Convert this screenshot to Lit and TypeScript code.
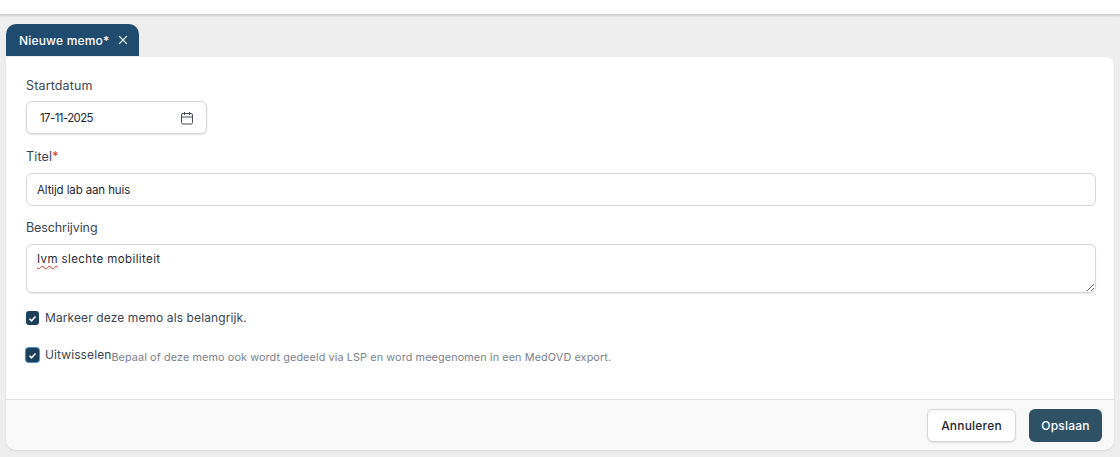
import { LitElement, html, css } from 'lit';
import { customElement } from 'lit/decorators.js';

@customElement('app-root')
export class AppRoot extends LitElement {
  static styles = css`
    :host {
      display: block;
      height: 457px;
      overflow: hidden;
      background: #eeeeee;
      font-family: Inter, 'Noto Sans', sans-serif;
      font-size: 12px;
      color: #1f2933;
    }
    .topbar {
      height: 14px;
      background: #fff;
      border-bottom: 1px solid #cfcfcf;
      box-shadow: 0 1px 2px rgba(0, 0, 0, 0.12);
    }
    .tabs {
      display: flex;
      padding: 9px 6px 0;
    }
    .tab {
      display: flex;
      align-items: center;
      gap: 9px;
      height: 32px;
      width: 133px;
      box-sizing: border-box;
      padding: 0 10px 0 13px;
      background: #1f4b6e;
      color: #fff;
      border-radius: 10px 10px 0 0;
      font-weight: 500;
      font-size: 12px;
      letter-spacing: 0.18px;
      white-space: nowrap;
    }
    .tab svg { flex: none; }
    .card {
      margin: 1px 6px 0;
      height: 393px;
      box-sizing: border-box;
      background: #fff;
      border-radius: 0 8px 10px 10px;
      box-shadow: 0 1px 2px rgba(0, 0, 0, 0.1);
      display: flex;
      flex-direction: column;
      overflow: hidden;
    }
    .form {
      flex: 1;
      display: flex;
      flex-direction: column;
      padding: 21px 18px 0 20px;
    }
    .label {
      color: #3c4653;
      font-size: 12.5px;
      line-height: 16px;
      letter-spacing: 0.15px;
    }
    .desc-label {
      margin-top: 14px;
      letter-spacing: -0.1px;
    }
    .title-label { margin-top: 15px; }
    .req { color: #d9342b; }
    .field {
      box-sizing: border-box;
      display: flex;
      align-items: center;
      background: #fff;
      border: 1px solid #d6d6d6;
      border-radius: 6px;
      font-size: 11.5px;
      color: #1f2933;
    }
    .date {
      width: 181px;
      height: 33px;
      margin-top: 7px;
      padding: 0 12px 0 13px;
      justify-content: space-between;
      letter-spacing: -0.6px;
      box-shadow: 0 1px 2px rgba(0, 0, 0, 0.12);
    }
    .text {
      height: 33px;
      margin-top: 8px;
      padding: 0 10px;
      letter-spacing: -0.12px;
    }
    .area {
      display: block;
      height: 49px;
      margin-top: 8px;
      padding: 6px 10px;
      line-height: 16px;
      letter-spacing: 0.4px;
      resize: vertical;
      overflow: auto;
      box-shadow: 0 1px 1px rgba(0, 0, 0, 0.08);
    }
    .typo {
      text-decoration: underline wavy #d9342b 1px;
      text-underline-offset: 2px;
    }
    .check {
      display: flex;
      align-items: flex-start;
      gap: 6px;
      color: #3c4653;
      font-size: 12px;
      line-height: 16px;
      letter-spacing: 0.1px;
    }
    .check .txt { padding-top: 1px; }
    .check.first { margin-top: 16px; }
    .check.second { margin-top: 20px; }
    .box {
      flex: none;
      width: 13px;
      height: 14px;
      margin-top: 2px;
      background: #1c3f5a;
      border-radius: 3px;
      display: flex;
      align-items: center;
      justify-content: center;
    }
    .second .box { box-shadow: 0 0 0 1px #4f8fc4; }
    .hint {
      color: #7b828b;
      font-size: 10.8px;
      letter-spacing: 0.12px;
      margin-top: 4px;
      margin-left: -6px;
      white-space: nowrap;
    }
    .footer {
      height: 51px;
      box-sizing: border-box;
      background: #f9f9f9;
      border-top: 1px solid #e1e1e1;
      display: flex;
      align-items: center;
      justify-content: flex-end;
      gap: 13px;
      padding: 0 12px 0 0;
    }
    .btn {
      box-sizing: border-box;
      height: 33px;
      border-radius: 6px;
      display: flex;
      align-items: center;
      justify-content: center;
      font-size: 12px;
      font-weight: 500;
      letter-spacing: 0.2px;
    }
    .cancel {
      width: 89px;
      background: #fff;
      border: 1px solid #d6d6d6;
      color: #1f2933;
      box-shadow: 0 1px 2px rgba(0, 0, 0, 0.1);
    }
    .save {
      width: 73px;
      background: #2e5166;
      color: #fff;
    }
  `;

  render() {
    return html`
      <div class="topbar"></div>
      <div class="tabs">
        <div class="tab">
          <span>Nieuwe memo*</span>
          <svg width="10" height="10" viewBox="0 0 10 10" fill="none" stroke="#e8eef3" stroke-width="1.1">
            <path d="M1 1l8 8M9 1l-8 8" />
          </svg>
        </div>
      </div>
      <div class="card">
        <div class="form">
          <div class="label">Startdatum</div>
          <div class="field date">
            <span>17-11-2025</span>
            <svg width="14" height="14" viewBox="0 0 14 14" fill="none" stroke="#4a4f57" stroke-width="1">
              <rect x="1.5" y="2.5" width="11" height="10.5" rx="1.5" />
              <path d="M1.5 6h11M4.5 1v3M9.5 1v3" />
            </svg>
          </div>
          <div class="label title-label">Titel<span class="req">*</span></div>
          <div class="field text">Altijd lab aan huis</div>
          <div class="label desc-label">Beschrijving</div>
          <div class="field area"><span class="typo">Ivm</span> slechte mobiliteit</div>
          <div class="check first">
            <span class="box">
              <svg width="9" height="9" viewBox="0 0 9 9" fill="none" stroke="#fff" stroke-width="1.5">
                <path d="M1.5 4.8l2 2 4-4.3" />
              </svg>
            </span>
            <span class="txt">Markeer deze memo als belangrijk.</span>
          </div>
          <div class="check second">
            <span class="box">
              <svg width="9" height="9" viewBox="0 0 9 9" fill="none" stroke="#fff" stroke-width="1.5">
                <path d="M1.5 4.8l2 2 4-4.3" />
              </svg>
            </span>
            <span class="txt">Uitwisselen</span>
            <span class="hint">Bepaal of deze memo ook wordt gedeeld via LSP en word meegenomen in een MedOVD export.</span>
          </div>
        </div>
        <div class="footer">
          <div class="btn cancel">Annuleren</div>
          <div class="btn save">Opslaan</div>
        </div>
      </div>
    `;
  }
}
